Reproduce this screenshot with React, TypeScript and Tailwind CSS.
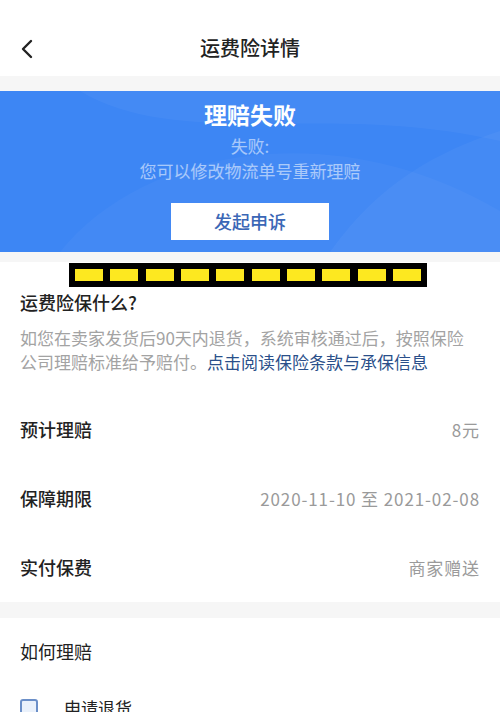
import { ChevronLeft } from "lucide-react";

const font = { fontFamily: '"Noto Sans CJK SC", "Noto Sans", sans-serif' };

const rows = [
  { label: "预计理赔", value: "8元" },
  { label: "保障期限", value: "2020-11-10 至 2021-02-08" },
  { label: "实付保费", value: "商家赠送" },
];

export default function App() {
  return (
    <div className="relative h-[712px] w-[500px] overflow-hidden bg-[#f6f6f6]" style={font}>
      {/* Header */}
      <div className="relative flex h-[76px] items-center justify-center bg-white">
        <ChevronLeft className="absolute left-[11px] top-[33px] h-[32px] w-[32px] text-[#222]" strokeWidth={1.8} />
        <h1 className="mt-[20px] text-[20px] font-medium text-[#222]">运费险详情</h1>
      </div>

      {/* Status banner */}
      <div className="relative mt-[15px] h-[161px] overflow-hidden bg-[#3d86f4]">
        <svg className="absolute inset-0 h-full w-full" viewBox="0 0 500 161" preserveAspectRatio="none">
          <path d="M80 0 C 180 60, 330 10, 500 50 L500 0 Z" fill="#ffffff" fillOpacity="0.04" />
          <path d="M60 161 C 140 60, 330 20, 500 120 L500 161 Z" fill="#ffffff" fillOpacity="0.03" />
          <path d="M330 161 C 380 90, 440 60, 500 40 L500 161 Z" fill="#ffffff" fillOpacity="0.04" />
        </svg>
        <div className="relative flex flex-col items-center">
          <div className="mt-[7px] text-[23px] font-bold leading-[32px] text-white">理赔失败</div>
          <div className="mt-[3px] text-[17px] leading-[25px] text-white/55">失败:</div>
          <div className="text-[17px] leading-[25px] text-white/55">您可以修改物流单号重新理赔</div>
          <button className="mt-[20px] flex h-[37px] w-[158px] items-center justify-center bg-white text-[18px] font-medium text-[#3b67b6]">
            发起申诉
          </button>
        </div>
      </div>

      {/* Coverage section */}
      <div className="mt-[10px] bg-white px-[20px]">
        <div className="pt-[26px] text-[18px] font-medium leading-[28px] text-[#222]">运费险保什么?</div>
        <p className="mt-[10px] text-[17px] leading-[24px] text-[#a3a3a3]">
          如您在卖家发货后90天内退货，系统审核通过后，按照保险公司理赔标准给予赔付。
          <span className="text-[#2a4f8a]">点击阅读保险条款与承保信息</span>
        </p>
        <div className="mt-[21px] flex flex-col">
          {rows.map((r) => (
            <div key={r.label} className="flex h-[69px] items-center justify-between">
              <span className="text-[18px] font-medium text-[#222]">{r.label}</span>
              <span className="text-[17px] tracking-[0.9px] text-[#9a9a9a]">{r.value}</span>
            </div>
          ))}
        </div>
      </div>

      {/* How to claim */}
      <div className="mt-[16px] bg-white px-[20px]">
        <div className="pt-[19px] text-[18px] leading-[28px] text-[#222]">如何理赔</div>
        <div className="mt-[30px] flex items-center gap-[26px]">
          <div className="h-[18px] w-[18px] rounded-[3px] border-2 border-[#6b8fc8] bg-[#eaf1fb]" />
          <span className="text-[17px] text-[#222]">申请退货</span>
        </div>
      </div>

      {/* Redaction bar */}
      <div className="absolute left-[69px] top-[263px] flex h-[24px] w-[358px] items-center justify-between bg-black px-[6px]">
        {Array.from({ length: 10 }).map((_, i) => (
          <div key={i} className="h-[12px] w-[28px] bg-[#fde820]" />
        ))}
      </div>
    </div>
  );
}
